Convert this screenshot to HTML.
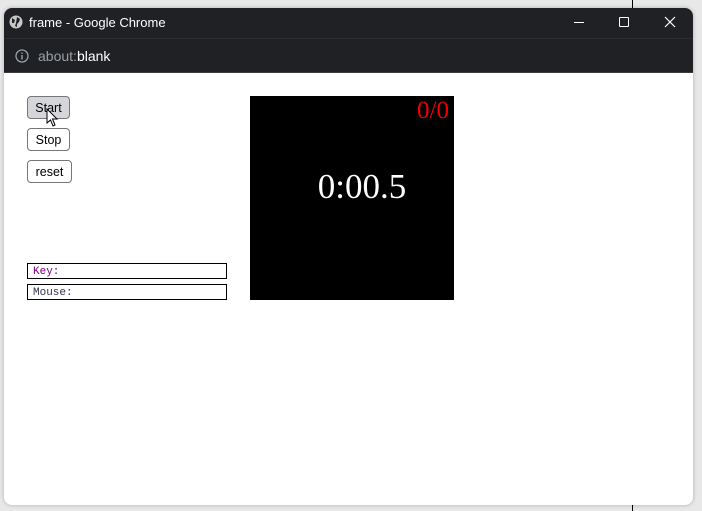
<!DOCTYPE html>
<html><head><style>
*{margin:0;padding:0;box-sizing:border-box}
body{width:702px;height:511px;background:#e8e8e8;position:relative;overflow:hidden;font-family:"Liberation Sans",sans-serif}
.vline{position:absolute;left:632px;top:0;width:1px;height:511px;background:#000}
.win{position:absolute;left:4px;top:8px;width:689px;height:497px;background:#fff;border-radius:8px;overflow:hidden;box-shadow:0 0 4px rgba(0,0,0,.25)}
.title{position:absolute;left:0;top:0;width:100%;height:30px;background:#202124;color:#fff;font-size:13px}
.addr{position:absolute;left:0;top:30px;width:100%;height:35px;background:#202124;border-top:1px solid #2c2d30;border-bottom:1px solid #3c3c3c;color:#fff;font-size:14px}
.btn{position:absolute;left:23px;height:23px;border:1px solid #767676;border-radius:4px;background:#fff;font-size:12.5px;text-align:center;line-height:23px;color:#000}
.box{position:absolute;left:23px;width:200px;height:16px;border:1px solid #000;font-family:"Liberation Mono",monospace;font-size:11px;line-height:16px;padding-left:5px}
.screen{position:absolute;left:246px;top:88px;width:204px;height:204px;background:#000}
</style></head><body>
<div class="vline"></div>
<div class="win">
 <div class="title">
  <svg style="position:absolute;left:5px;top:7px" width="14" height="14" viewBox="0 0 14 14"><circle cx="7" cy="7" r="6.5" fill="#c8c8c8"/><path d="M3 3 L6 5 L5 8 L3 8 Z M8 2 L11 4 L10 7 L8 9 L8 12 L6 11 L7 8 Z" fill="#202124"/></svg>
  <span style="position:absolute;left:25px;top:7px">frame - Google Chrome</span>
  <div style="position:absolute;left:570px;top:14px;width:10px;height:1px;background:#fff"></div>
  <div style="position:absolute;left:615px;top:9px;width:10px;height:10px;border:1px solid #fff;border-radius:1px"></div>
  <svg style="position:absolute;left:660px;top:8px" width="12" height="12"><path d="M1 1L11 11M11 1L1 11" stroke="#fff" stroke-width="1.2"/></svg>
 </div>
 <div class="addr">
  <svg style="position:absolute;left:11px;top:10px" width="14" height="14"><circle cx="7" cy="7" r="6" fill="none" stroke="#9aa0a6" stroke-width="1.3"/><rect x="6.3" y="6" width="1.4" height="4.5" fill="#9aa0a6"/><rect x="6.3" y="3.5" width="1.4" height="1.4" fill="#9aa0a6"/></svg>
  <span style="position:absolute;left:34px;top:9px"><span style="color:#9aa0a6">about:</span>blank</span>
 </div>
 <div class="btn" style="top:88px;width:43px;background:#d4d6d9">Start</div>
 <div class="btn" style="top:120px;width:43px">Stop</div>
 <div class="btn" style="top:152px;width:45px">reset</div>
 <svg style="position:absolute;left:42px;top:100px" width="14" height="20" viewBox="0 0 14 20"><path d="M1 1 L1 15 L4.5 12 L7 18 L9 17 L6.5 11 L11 11 Z" fill="#fff" stroke="#000" stroke-width="1"/></svg>
 <div class="box" style="top:255px"><span style="color:#800080">Key:</span></div>
 <div class="box" style="top:276px"><span style="color:#335">Mouse:</span></div>
 <div class="screen">
  <div style="position:absolute;right:5px;top:1px;color:#e00;font-family:'Liberation Serif',serif;font-size:25px">0/0</div>
  <div style="position:absolute;left:10px;width:100%;top:71px;text-align:center;color:#fff;font-family:'Liberation Serif',serif;font-size:35px">0:00.5</div>
 </div>
</div>
</body></html>
